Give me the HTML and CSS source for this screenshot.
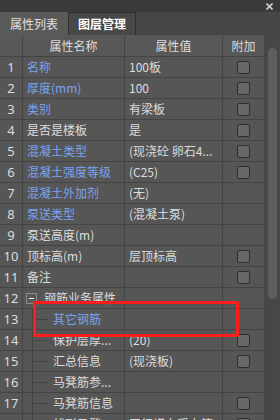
FILE: index.html
```html
<!DOCTYPE html>
<html lang="zh-CN">
<head>
  <meta charset="UTF-8" />
  <meta name="viewport" content="width=device-width, initial-scale=1" />
  <title>属性列表</title>
  <link rel="stylesheet" href="styles.css">
</head>
<body>

<div class="panel">
  <!-- title strip -->
  <div class="titlebar">
    <svg class="close" width="7" height="7" viewBox="0 0 7 7">
      <path d="M0.5 0.5 L6.5 6.5 M6.5 0.5 L0.5 6.5" stroke="#d0d0d0" stroke-width="1.6"/>
    </svg>
  </div>

  <!-- tabs -->
  <div class="tabs">
    <div class="tab active">属性列表</div>
    <div class="tab">图层管理</div>
  </div>

  <div class="content">
    <div class="grid">
      <div class="row head">
        <div class="cell num"></div>
        <div class="cell center">属性名称</div>
        <div class="cell center">属性值</div>
        <div class="cell center">附加</div>
      </div>

      <div class="row"><div class="cell num">1</div><div class="cell link">名称</div><div class="cell">100板</div><div class="cell"><span class="check"></span></div></div>
      <div class="row"><div class="cell num">2</div><div class="cell link">厚度(mm)</div><div class="cell">100</div><div class="cell"><span class="check"></span></div></div>
      <div class="row"><div class="cell num">3</div><div class="cell link">类别</div><div class="cell">有梁板</div><div class="cell"><span class="check"></span></div></div>
      <div class="row"><div class="cell num">4</div><div class="cell">是否是楼板</div><div class="cell">是</div><div class="cell"><span class="check"></span></div></div>
      <div class="row"><div class="cell num">5</div><div class="cell link">混凝土类型</div><div class="cell">(现浇砼 卵石4...</div><div class="cell"><span class="check"></span></div></div>
      <div class="row"><div class="cell num">6</div><div class="cell link">混凝土强度等级</div><div class="cell">(C25)</div><div class="cell"><span class="check"></span></div></div>
      <div class="row"><div class="cell num">7</div><div class="cell link">混凝土外加剂</div><div class="cell">(无)</div><div class="cell"></div></div>
      <div class="row"><div class="cell num">8</div><div class="cell link">泵送类型</div><div class="cell">(混凝土泵)</div><div class="cell"></div></div>
      <div class="row"><div class="cell num">9</div><div class="cell">泵送高度(m)</div><div class="cell"></div><div class="cell"></div></div>
      <div class="row"><div class="cell num">10</div><div class="cell">顶标高(m)</div><div class="cell">层顶标高</div><div class="cell"><span class="check"></span></div></div>
      <div class="row"><div class="cell num">11</div><div class="cell">备注</div><div class="cell"></div><div class="cell"><span class="check"></span></div></div>
      <div class="row"><div class="cell num">12</div><div class="cell group"><span class="toggle"></span>钢筋业务属性</div><div class="cell"></div><div class="cell"></div></div>
      <div class="row"><div class="cell num">13</div><div class="cell child link">其它钢筋</div><div class="cell"></div><div class="cell"></div></div>
      <div class="row"><div class="cell num">14</div><div class="cell child">保护层厚...</div><div class="cell">(20)</div><div class="cell"><span class="check"></span></div></div>
      <div class="row"><div class="cell num">15</div><div class="cell child">汇总信息</div><div class="cell">(现浇板)</div><div class="cell"><span class="check"></span></div></div>
      <div class="row"><div class="cell num">16</div><div class="cell child">马凳筋参...</div><div class="cell"></div><div class="cell"></div></div>
      <div class="row"><div class="cell num">17</div><div class="cell child">马凳筋信息</div><div class="cell"></div><div class="cell"><span class="check"></span></div></div>
      <div class="row"><div class="cell num">18</div><div class="cell child">线形马凳...</div><div class="cell">平行横向受力筋</div><div class="cell"><span class="check"></span></div></div>
    </div>

    <div class="scrollbar"><div class="thumb"></div></div>
  </div>

  <!-- annotation box drawn over the rows -->
  <div class="mark"></div>
</div>

</body>
</html>
```

FILE: styles.css
```css
body {
  margin: 0;
  background: #3a3a3a;
  font-family: "Noto Sans CJK SC", "Noto Sans", sans-serif;
  font-size: 12px;
  color: #dcdcdc;
}
.panel {
  position: relative;
  width: 280px;
  height: 420px;
  overflow: hidden;
  background: #3a3a3a;
}
.titlebar {
  height: 12px;
  display: flex;
  justify-content: flex-end;
  align-items: center;
  padding-right: 7px;
  background: #3a3a3a;
}
.tabs {
  height: 23px;
  display: flex;
  align-items: flex-end;
  background: #464646;
}
.tab {
  height: 23px;
  box-sizing: border-box;
  padding: 0 9px;
  line-height: 22px;
  background: #484848;
  border: 1px solid #2e2e2e;
  border-bottom: none;
  color: #ffffff;
  font-weight: bold;
}
.tab.active {
  background: #5a5a5a;
  border-color: #5a5a5a;
  color: #e0e0e0;
  font-weight: normal;
}
.content {
  display: flex;
}
.grid {
  width: 265px;
  background: #565656;
}
.row {
  display: grid;
  grid-template-columns: 23px 102px 98px 42px;
  height: 21px;
  box-sizing: border-box;
  border-bottom: 1px solid #444;
}
.row.head {
  height: 22px;
  background: #585858;
}
.row.head .cell {
  line-height: 21px;
}
.cell {
  box-sizing: border-box;
  border-right: 1px solid #444;
  padding-left: 4px;
  line-height: 20px;
  white-space: nowrap;
  overflow: hidden;
  display: flex;
  align-items: center;
}
.cell.center {
  justify-content: center;
  padding-left: 0;
}
.cell.num {
  justify-content: center;
  padding-left: 0;
  font-family: "Noto Sans", sans-serif;
  font-size: 13px;
}
.row .cell:last-child {
  justify-content: center;
  padding-left: 0;
}
.link {
  color: #7aa3f2;
}
.group {
  padding-left: 3px;
}
.toggle {
  position: relative;
  width: 9px;
  height: 9px;
  border: 1px solid #8c8c8c;
  background: #575757;
  margin-right: 7px;
  flex: none;
}
.toggle::after {
  content: "";
  position: absolute;
  left: 2px;
  top: 4px;
  width: 5px;
  height: 1px;
  background: #eee;
}
.child {
  padding-left: 30px;
  background:
    linear-gradient(#434343, #434343) 9px 0 / 1px 100% no-repeat,
    linear-gradient(#434343, #434343) 9px 50% / 16px 1px no-repeat;
}
.check {
  width: 13px;
  height: 13px;
  box-sizing: border-box;
  border: 1px solid #2f2f2f;
  border-radius: 2px;
  background: #676767;
}
.scrollbar {
  width: 15px;
  height: 385px;
  background: #474747;
}
.thumb {
  margin: 13px 0 0 3px;
  width: 9px;
  height: 251px;
  border-radius: 5px;
  background: #5e5e5e;
}
.mark {
  position: absolute;
  left: 33px;
  top: 301px;
  width: 206px;
  height: 36px;
  box-sizing: border-box;
  border: 3px solid #ff1c1c;
  border-radius: 2px;
}
```
